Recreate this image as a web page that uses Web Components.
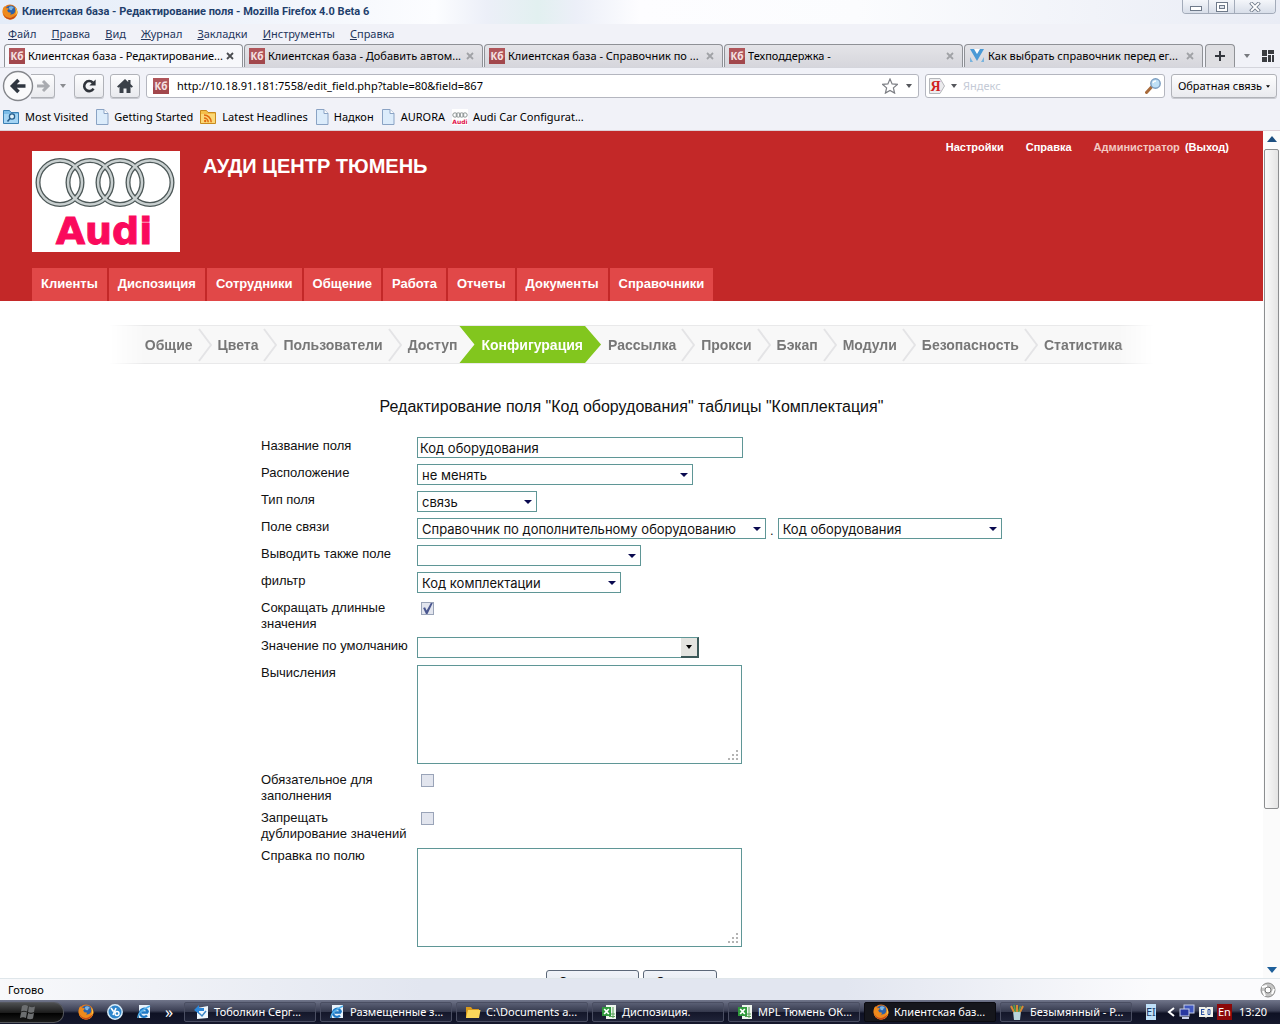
<!DOCTYPE html>
<html lang="ru">
<head>
<meta charset="utf-8">
<title>Клиентская база - Редактирование поля</title>
<style>
html, body { margin: 0; height: 100%; }
body { overflow: hidden; }
</style>
</head>
<body>
<browser-window></browser-window>
<script>
const ICONS = {
  fox: ['0 0 16 16', '<circle cx="8" cy="8" r="7.5" fill="#e8791a"/><circle cx="8.6" cy="6.4" r="5" fill="#2d62a8"/><path d="M7 3q3-2 5 1-2 0-2 2-3 1-3-3z" fill="#7db6e4"/><path d="M.6 6Q1 3 2.8 2.200q.2 1.600 1.400 2 1.800-.6 2.800.6-1 .8-1.800 1.600 1 2.400 3.200 2.200 1.200.8-.4 1.800 3.800.6 5.400-3.200.6-2.600-.8-4.600 3.600 3 2.600 7.400Q13.500 15.500 8 15.500.5 15 .6 6z" fill="#ee8a1c"/><path d="M1.200 9q2 5.500 8 4.800 4-.8 5.500-4Q13 15.400 8 15.400 2.500 15 1.200 9z" fill="#c4481a"/><path d="M12.800 3.400q2.400 3.600.4 7.600l1.400-1.200q1.400-3.600-1.800-6.400z" fill="#fbd04a"/>'],
  kb: ['0 0 16 16', '<rect width="16" height="16" fill="#b0555a"/><path d="M0 16h16V9Q8 13 0 9z" fill="#a2474c"/><text x="8" y="12" text-anchor="middle" font-family="Open Sans" font-weight="700" font-size="10" fill="#f6e4e4">Кб</text>'],
  vee: ['0 0 16 16', '<path d="M1 1h14L8 13z" fill="#4a9ad6"/><path d="M1 9l3 5H1zM15 9l-3 5h3z" fill="#7ab4de"/><path d="M5 1h6L8 6z" fill="#fff"/>'],
  back: ['0 0 32 32', '<circle cx="16" cy="16" r="14.500" fill="#fafafb" stroke="#85878c" stroke-width="1.400"/><path d="M16.500 10l-6 6 6 6M11 16h12.500" fill="none" stroke="#2f3640" stroke-width="3.600"/>'],
  fwd: ['0 0 16 16', '<path d="M8 3l5 5-5 5M13 8H2" fill="none" stroke="#a9abb0" stroke-width="3"/>'],
  reload: ['0 0 16 16', '<path d="M12.500 10.600A5 5 0 1 1 11.800 4.600" fill="none" stroke="#2f333a" stroke-width="2.600"/><path d="M14.600 1.400v6.200H8.400z" fill="#2f333a"/>'],
  home: ['0 0 16 16', '<path d="M8 1L0 8.400l1.400 1.400 1.100-1V15h4v-4.500h3V15h4V8.800l1.100 1L16 8.400l-2.500-2.300V2h-2.300v2z" fill="#3a4048"/>'],
  star: ['0 0 16 16', '<path d="M8 1l2.100 4.900 5.300.5-4 3.500 1.200 5.200L8 12.400l-4.600 2.700 1.200-5.200-4-3.500 5.300-.5z" fill="#fff" stroke="#7c7e84" stroke-width="1.200"/>'],
  down: ['0 0 6 4', '<path d="M0 0h6L3 4z" fill="currentColor"/>'],
  up: ['0 0 10 6', '<path d="M0 6h10L5 0z" fill="#1d4f80"/>'],
  dn: ['0 0 10 6', '<path d="M0 0h10L5 6z" fill="#1d5f9a"/>'],
  ya: ['0 0 16 16', '<path d="M.5.500h10.500l4.500 7.500-4.500 7.500H.5z" fill="#ececee" stroke="#b4b6ba"/><text x="6.500" y="12.500" text-anchor="middle" font-family="Liberation Serif" font-weight="700" font-size="14" fill="#d02020">Я</text>'],
  mag: ['0 0 16 16', '<path d="M1.500 14.500l5-5.500" stroke="#a86a3a" stroke-width="3" stroke-linecap="round"/><circle cx="10.500" cy="5.500" r="4.700" fill="#bfe0f6" stroke="#7a9cc0" stroke-width="1.400"/><path d="M8 5q.5-2 3-2" stroke="#fff" fill="none" stroke-width="1.400"/>'],
  folderq: ['0 0 16 16', '<path d="M.5 1.500h6l1.500 2h7.500v11H.5z" fill="#7cbce8" stroke="#3b80b4"/><path d="M1 5h14v9H1z" fill="#a4d4f4"/><circle cx="9" cy="7.500" r="2.600" fill="#dff1fc" stroke="#285e8c" stroke-width="1.300"/><path d="M7 9.500L4.500 12.500" stroke="#285e8c" stroke-width="1.600"/>'],
  page: ['0 0 14 16', '<path d="M1.500.500h7.500l4 4v11H1.500z" fill="#dcecfb" stroke="#8aa3c4"/><path d="M9 .5v4h4" fill="#fff" stroke="#8aa3c4"/>'],
  feed: ['0 0 16 16', '<path d="M.5 1.500h6l1.500 2h7.500v11H.5z" fill="#f4c04a" stroke="#c98a1e"/><path d="M1 5h14v9H1z" fill="#fbd877"/><circle cx="5.200" cy="12" r="1.200" fill="#e06a10"/><path d="M4 9a4.200 4.200 0 0 1 4.200 4.200M4 6a7.200 7.200 0 0 1 7.200 7.200" fill="none" stroke="#e06a10" stroke-width="1.500"/>'],
  audis: ['0 0 16 16', '<rect width="16" height="16" fill="#fff"/><g fill="none" stroke="#8c9494"><circle cx="3" cy="6" r="2.200"/><circle cx="6.300" cy="6" r="2.200"/><circle cx="9.700" cy="6" r="2.200"/><circle cx="13" cy="6" r="2.200"/></g><text x="8" y="14.500" text-anchor="middle" font-family="DejaVu Sans" font-weight="700" font-size="6" fill="#e0144c">Audi</text>'],
  groups: ['0 0 12 12', '<path d="M0 0h5v6H0zM6 0h6v4H6zM0 7h5v5H0zM6 5h3v7H6zM10 5h2v7h-2z" fill="#3a3c40"/>'],
  plus: ['0 0 10 10', '<path d="M5 0v10M0 5h10" stroke="#33363c" stroke-width="2"/>'],
  x: ['0 0 8 8', '<path d="M1 1l6 6M7 1L1 7" stroke="currentColor" stroke-width="1.800"/>'],
  min: ['0 0 12 10', '<rect x=".5" y="4.500" width="11" height="4" fill="#fff" stroke="#6f7a8a"/>'],
  max: ['0 0 12 10', '<rect x=".5" y=".5" width="11" height="9" fill="#fff" stroke="#6f7a8a"/><rect x="3.500" y="3.500" width="5" height="3" fill="#dfe4ec" stroke="#6f7a8a"/>'],
  close: ['0 0 12 10', '<path d="M1.500.500l9 9M10.500.500l-9 9" stroke="#6f7a8a" stroke-width="3.600"/><path d="M2 1l8 8M10 1l-8 8" stroke="#fff" stroke-width="1.800"/>'],
  rings: ['0 0 148 101', '<rect width="148" height="101" fill="#fff"/><g fill="none"><g stroke="#4d5858" stroke-width="5"><circle cx="28" cy="31.500" r="22"/><circle cx="58" cy="31.500" r="22"/><circle cx="88" cy="31.500" r="22"/><circle cx="118" cy="31.500" r="22"/></g><g stroke="#c9d0d0" stroke-width="2.400"><circle cx="28" cy="31.500" r="22"/><circle cx="58" cy="31.500" r="22"/><circle cx="88" cy="31.500" r="22"/><circle cx="118" cy="31.500" r="22"/></g></g><text x="72" y="93" text-anchor="middle" font-family="DejaVu Sans" font-weight="700" font-size="38" fill="#fa0a5c" stroke="#fa0a5c">Audi</text>'],
  chev: ['0 0 14 34', '<path d="M1 1l12 16L1 33" fill="none" stroke="#e4e4e6" stroke-width="2"/>'],
  grip: ['0 0 10 10', '<path d="M8 0h2v2H8zM4 4h2v2H4zM8 4h2v2H8zM0 8h2v2H0zM4 8h2v2H4zM8 8h2v2H8z" fill="#b4b4b4"/>'],
  recycle: ['0 0 16 16', '<circle cx="8" cy="8" r="7" fill="#c4c4c4" stroke="#8a8a8a"/><circle cx="8" cy="8" r="3" fill="#fff" stroke="#777"/><path d="M2 5l5-1M14 7l-2 5M5 14l-2-5" stroke="#fff" stroke-width="2"/>'],
  win: ['0 0 16 16', '<path d="M2 2q3-2 6 0L7 7.500Q4 6 1 7.500zM9 2.500q3 1.500 6 0l-1 5.500q-3 1.500-6 0zM1 8.500q3-1.500 6 0L6 14q-3-1.500-6 0zM8 9q3 1.500 6 0l-1 5.500q-3 1.500-6 0z" fill="#6c6e70"/>'],
  yo: ['0 0 16 16', '<circle cx="8" cy="8" r="7.200" fill="#2f86cc" stroke="#d8ecfa" stroke-width="1.500"/><path d="M4 4l2.500 3.500M9 4L6 11" stroke="#fff" stroke-width="1.600"/><circle cx="10" cy="9.500" r="2" fill="none" stroke="#fff" stroke-width="1.400"/>'],
  ie: ['0 0 16 16', '<path d="M3 1h11v13H3z" fill="#e8f2fa"/><path d="M12 8.500H5.500M12 8.500A4 4 0 1 0 11 11.500" fill="none" stroke="#1f78c4" stroke-width="2.400"/><path d="M2 14Q1 8 14 2" stroke="#54b0ea" stroke-width="1.400" fill="none"/>'],
  outl: ['0 0 16 16', '<path d="M4 4l11-2v12l-11 1z" fill="#eef6fc"/><path d="M6 9l3 3 4-5" stroke="#3d86c6" fill="none" stroke-width="1.500"/><path d="M1 6l5-5v3h5v3H6v3z" fill="#2c86d8"/>'],
  folder: ['0 0 16 16', '<path d="M1 3h5l1.500 2H14v9H1z" fill="#d99a1c"/><path d="M3 6h12.500L14 14H1z" fill="#fbd75a"/>'],
  xl: ['0 0 16 16', '<path d="M5 1h10v14H5z" fill="#eef6ee"/><path d="M8 10h6M8 12.500h6M12 3v11" stroke="#58a058"/><rect x="1" y="3" width="9" height="9" fill="#2f9a3c"/><path d="M3.200 5l4.600 5M7.800 5l-4.600 5" stroke="#fff" stroke-width="1.700"/>'],
  paint: ['0 0 16 16', '<path d="M4 7h8l-1 9H5z" fill="#b8d4dc"/><path d="M5 8L2 2M8 8V1M11 8l3-6" stroke="#d88a34" stroke-width="2"/><path d="M6.500 8L5 1M9.500 8l2-6" stroke="#54a04a" stroke-width="1.600"/>'],
  net: ['0 0 16 16', '<rect x="5" y="1" width="10" height="8" fill="#4058c0" stroke="#c8d0e8"/><rect x="1" y="5" width="9" height="7" fill="#2838a0" stroke="#c8d0e8"/><path d="M3 14h7" stroke="#c8d0e8" stroke-width="2"/>'],
  dict: ['0 0 14 12', '<path d="M0 1h6l1 1 1-1h6v10H8l-1 1-1-1H0z" fill="#f2f2ea"/><path d="M2.500 3v6M2.500 3.500h3M2.500 6h2.500M2.500 8.500h3M9 3.500h2v5H9z" fill="none" stroke="#2a50a0"/>'],
  lt: ['0 0 8 10', '<path d="M7 1L2 5l5 4" fill="none" stroke="#fff" stroke-width="2"/>']
};

class Shadowed extends HTMLElement {
  connectedCallback() {
    if (this.shadowRoot) return;
    this.attachShadow({ mode: 'open' }).innerHTML =
      '<style>*{box-sizing:border-box}' + this.css() + '</style>' + this.html();
  }
  css() { return ''; }
  html() { return '<slot></slot>'; }
}
const define = (name, css, html) => customElements.define(name, class extends Shadowed {
  css() { return typeof css === 'function' ? css(this) : css; }
  html() { return typeof html === 'function' ? html(this) : html; }
});
const icon = (n, w = 16, h = w) => `<ui-icon name="${n}" w="${w}" h="${h}"></ui-icon>`;

define('ui-icon',
  el => `:host{display:inline-block;flex:none;width:${el.getAttribute('w')}px;height:${el.getAttribute('h')}px}svg{display:block;width:100%;height:100%}`,
  el => { const [box, body] = ICONS[el.getAttribute('name')]; return `<svg viewBox="${box}" aria-hidden="true">${body}</svg>`; });

define('title-bar', `
  :host{display:flex;align-items:center;height:24px;padding-left:2px;gap:4px;font:700 11px/16px Roboto,sans-serif;color:#1f3f6c;
    background:linear-gradient(90deg,#e4ecf8,#f0f4fb 20%,#fcfdff 34%,#eceff8 38%,#e2f0f0 42%,#eceff8 45%,#fdfdff 50%,#fbfcfe 67%,#e9ecf5)}
  .t{flex:1}
  .w{display:flex;align-self:flex-start;margin-right:4px;border:1px solid #a3abb9;border-top:0;border-radius:0 0 4px 4px;overflow:hidden}
  button{width:26px;height:13px;padding:0;border:0;border-right:1px solid #a3abb9;background:linear-gradient(#f4f6fa,#d8dee9);display:grid;place-items:center}
  button:last-child{width:40px;border:0}`,
  `${icon('fox')}<span class="t">Клиентская база - Редактирование поля - Mozilla Firefox 4.0 Beta 6</span>
  <div class="w"><button aria-label="Свернуть">${icon('min', 12, 10)}</button><button aria-label="Развернуть">${icon('max', 12, 10)}</button><button aria-label="Закрыть">${icon('close', 12, 10)}</button></div>`);

define('menu-bar', `
  :host{display:flex;align-items:center;height:20px;padding-left:8px;gap:15px;font:11px/16px "Noto Sans",sans-serif;color:#24365c}
  button{font:inherit;color:inherit;border:0;background:none;padding:0}`,
  ['Файл', 'Правка', 'Вид', 'Журнал', 'Закладки', 'Инструменты', 'Справка'].map(m => `<button><u>${m[0]}</u>${m.slice(1)}</button>`).join(''));

define('browser-tab', `
  :host{display:flex;align-items:center;flex:0 1 239px;min-width:0;height:23px;padding:0 8px 0 4px;gap:3px;border:1px solid #8f9196;border-bottom:0;
    border-radius:4px 4px 0 0;background:linear-gradient(#e4e4e8,#d6d6dc);color:#a0a2a6;white-space:nowrap}
  :host([active]){background:#f7f8fb}
  span{flex:1;color:#000;overflow:hidden}
  button{border:0;padding:0;background:none;color:inherit;line-height:0}
  :host([active]) button{color:#4a4c50}`,
  el => `${icon(el.getAttribute('icon'))}<span><slot></slot></span><button aria-label="Закрыть вкладку">${icon('x', 8)}</button>`);

define('tab-strip', `
  :host{display:flex;align-items:flex-end;height:24px;padding:0 6px 0 4px;gap:1px;border-bottom:1px solid #d4d5dc;font:11px/16px "Noto Sans",sans-serif}
  .n{width:30px;height:23px;margin-left:1px;padding:0;border:1px solid #8f9196;border-bottom:0;border-radius:4px 4px 0 0;background:#dedee2}
  .r{display:flex;flex:1;align-items:center;justify-content:flex-end;gap:12px;height:23px;color:#77797e}`,
  `<browser-tab icon="kb" active>Клиентская база - Редактирование...</browser-tab>
  <browser-tab icon="kb">Клиентская база - Добавить автом...</browser-tab>
  <browser-tab icon="kb">Клиентская база - Справочник по ...</browser-tab>
  <browser-tab icon="kb">Техподдержка -</browser-tab>
  <browser-tab icon="vee">Как выбрать справочник перед ег...</browser-tab>
  <button class="n" aria-label="Новая вкладка">${icon('plus', 10)}</button>
  <div class="r">${icon('down', 6, 4)}${icon('groups', 12)}</div>`);

define('nav-bar', `
  :host{display:flex;align-items:center;height:36px;padding:0 3px 0 2px;font:11px/16px "Noto Sans",sans-serif;color:#55575c}
  button{font:inherit;height:24px;border:1px solid #b0b2b8;border-radius:3px;background:linear-gradient(#fdfdfe,#e9eaee);padding:0;display:flex;align-items:center;justify-content:center;box-shadow:0 1px 0 #c8cad0}
  .b{height:32px;border:0;background:none;box-shadow:none;z-index:1}
  .f{width:24px;margin-left:-3px;border-left:0;border-radius:0 3px 3px 0}
  .d{display:flex;margin:0 8px 0 5px;color:#8a8c90}
  .s{width:30px;margin-right:6px}
  .box{display:flex;align-items:center;height:24px;border:1px solid #b4b6bf;border-radius:3px;background:#fff;padding:0 6px}
  .url{flex:1;gap:8px}.q{width:240px;margin:0 6px;gap:6px;padding:0 3px}
  input{font:inherit;flex:1;min-width:0;border:0;padding:0;outline:0;background:none;color:#000}
  input::placeholder{color:#c4cad6;opacity:1}
  .o{color:#000;width:106px;gap:4px}`,
  `<button class="b" aria-label="Назад">${icon('back', 32)}</button><button class="f" aria-label="Вперёд">${icon('fwd')}</button><span class="d">${icon('down', 6, 4)}</span>
  <button class="s" aria-label="Обновить">${icon('reload')}</button><button class="s" aria-label="Домой">${icon('home')}</button>
  <div class="box url">${icon('kb')}<input aria-label="Адрес" value="http://10.18.91.181:7558/edit_field.php?table=80&amp;field=867">${icon('star')}${icon('down', 6, 4)}</div>
  <div class="box q">${icon('ya')}${icon('down', 6, 4)}<input aria-label="Поиск" placeholder="Яндекс">${icon('mag')}</div>
  <button class="o">Обратная связь ${icon('down', 4, 3)}</button>`);

define('bookmarks-bar', `
  :host{display:flex;align-items:center;height:27px;padding-left:3px;gap:7px;font:11px/16px "Noto Sans",sans-serif;border-bottom:1px solid #dccfd6}
  a{display:flex;align-items:center;gap:5px;color:#000;text-decoration:none}
  a:nth-child(even){gap:6px}`,
  [['folderq', 'Most Visited'], ['page', 'Getting Started'], ['feed', 'Latest Headlines'], ['page', 'Надкон'], ['page', 'AURORA'], ['audis', 'Audi Car Configurat...']]
    .map(([i, t]) => `<a href="#">${icon(i, i === 'page' ? 14 : 16, 16)}${t}</a>`).join(''));

define('site-header', `
  :host{display:flex;flex-direction:column;height:170px;padding:0 32px;background:#c32828;font:700 13px/16px "Liberation Sans",sans-serif;color:#fff}
  .top{flex:1;display:flex;align-items:flex-start;padding-top:20px}
  h1{flex:1;margin:3px 0 0 23px;font-size:20px;line-height:24px}
  .u{display:flex;gap:22px;margin:-12px 2px 0 0;font-size:11px}
  a{color:inherit;text-decoration:none}.p{color:#f3c9c2;margin-right:2px}
  nav{display:flex;gap:2px}
  nav a{padding:8px 9px 9px;background:#e14848}`,
  `<div class="top">${icon('rings', 148, 101)}<h1>АУДИ ЦЕНТР ТЮМЕНЬ</h1><div class="u"><a href="#">Настройки</a><a href="#">Справка</a><span><span class="p">Администратор</span> (<a href="#">Выход</a>)</span></div></div>
  <nav>${['Клиенты', 'Диспозиция', 'Сотрудники', 'Общение', 'Работа', 'Отчеты', 'Документы', 'Справочники'].map(t => `<a href="#">${t}</a>`).join('')}</nav>`);

define('settings-steps', `
  :host{display:flex;width:max-content;height:39px;margin:24px auto 0;padding:0 32px 0 36px;font:700 14px/38px "Liberation Sans",sans-serif;
    border:solid #e9e9ea;border-width:1px 0;background:#f8f8f8;
    -webkit-mask:linear-gradient(90deg,transparent,#000 36px,#000 calc(100% - 36px),transparent);mask:linear-gradient(90deg,transparent,#000 36px,#000 calc(100% - 36px),transparent)}
  a{display:flex;align-items:center;color:#777;text-decoration:none}
  ui-icon{margin:0 6px 0 5px}
  .on{color:#fff;background:#82c61e;padding:0 18px 0 22px;clip-path:polygon(0 0,calc(100% - 16px) 0,100% 50%,calc(100% - 16px) 100%,0 100%,15px 50%);margin:0 7px 0 2px}`,
  () => { const s = ['Общие', 'Цвета', 'Пользователи', 'Доступ', 'Конфигурация', 'Рассылка', 'Прокси', 'Бэкап', 'Модули', 'Безопасность', 'Статистика'];
    return s.map((t, i) => i === 4 ? `<a class="on" href="#">${t}</a>` : `<a href="#">${t}${i === 3 || i === 10 ? '' : icon('chev', 14, 34)}</a>`).join(''); });

const select = (id, text, w, label = '') => `<span class="sel" style="width:${w}px"><select id="${id}"${label && ` aria-label="${label}"`}><option>${text}</option></select></span>`;
const row = (id, label, control) => `<div class="row"><label for="${id}">${label}</label><div class="c">${control}</div></div>`;
define('field-editor', `
  :host{display:block;padding-bottom:16px;font:13px/16px "Liberation Sans",sans-serif;color:#111}
  h2{margin:33px 0 20px;font-weight:400;font-size:16px;line-height:20px;text-align:center}
  form{width:741px;max-width:100%;margin:0 auto;display:flex;flex-direction:column;gap:6px}
  .row{display:flex;gap:6px}
  label{flex:0 0 150px;margin:1px 0 -1px}
  .c{flex:1;display:flex;align-items:flex-start;gap:4px}
  input,select,textarea,button{font:13px/16px Inter,sans-serif;color:#111;margin:0}
  .t,select,textarea{border:1px solid #5f9696;border-radius:0;background:#fff;outline:0;height:21px}
  .t{width:326px;padding:1px 2px}
  .sel{position:relative;display:flex}
  select{appearance:none;width:100%;padding:0 4px}
  .sel::after{content:"";position:absolute;right:5px;top:9px;border:4px solid transparent;border-top-color:#0a0a50;border-bottom:0;pointer-events:none}
  .dot{align-self:flex-end}
  .ch{appearance:none;width:13px;height:13px;margin:3px 4px;border:1px solid #9aa4b8;background:#e2e5ee}
  .ch:checked::before{content:"";display:block;width:11px;height:11px;background:#4c5890;clip-path:polygon(10% 45%,28% 38%,42% 68%,80% 0,98% 0,50% 100%,36% 100%)}
  .combo{display:flex;width:282px}.combo .t{flex:1;width:auto;min-width:0;border-right:0}
  .combo button{width:18px;padding:0;border:1px solid #5f9696;border-width:1px 2px 2px 0;border-right-color:#3c5858;border-bottom-color:#3c5858;background:#e4e4e0;display:grid;place-items:center;color:#000}
  .area{position:relative;margin:1px 0;width:325px;height:99px}
  textarea{display:block;width:100%;height:100%;resize:none}
  .area ui-icon{position:absolute;right:4px;bottom:4px}
  .acts{display:flex;justify-content:center;gap:4px;margin-top:16px}
  .acts button{height:24px;padding:0;border:1px solid #5c6878;border-radius:3px;background:linear-gradient(#f0f3f8,#dfe4ec)}`,
  `<h2>Редактирование поля "Код оборудования" таблицы "Комплектация"</h2><form>
  ${row('name', 'Название поля', '<input class="t" id="name" value="Код оборудования">')}
  ${row('place', 'Расположение', select('place', 'не менять', 276))}
  ${row('type', 'Тип поля', select('type', 'связь', 120))}
  ${row('link', 'Поле связи', select('link', 'Справочник по дополнительному оборудованию', 349) + '<span class="dot">.</span>' + select('link2', 'Код оборудования', 224, 'Поле таблицы'))}
  ${row('also', 'Выводить также поле', select('also', '', 224))}
  ${row('filter', 'фильтр', select('filter', 'Код комплектации', 204))}
  ${row('short', 'Сокращать длинные значения', '<input class="ch" id="short" type="checkbox" checked>')}
  ${row('def', 'Значение по умолчанию', `<div class="combo"><input class="t" id="def"><button type="button" aria-label="Открыть список">${icon('down', 8, 4)}</button></div>`)}
  ${row('calc', 'Вычисления', `<div class="area"><textarea id="calc"></textarea>${icon('grip', 10)}</div>`)}
  ${row('req', 'Обязательное для заполнения', '<input class="ch" id="req" type="checkbox">')}
  ${row('uniq', 'Запрещать дублирование значений', '<input class="ch" id="uniq" type="checkbox">')}
  ${row('help', 'Справка по полю', `<div class="area"><textarea id="help"></textarea>${icon('grip', 10)}</div>`)}
  <div class="acts"><button type="button" style="width:93px">Сохранить</button><button type="button" style="width:74px">Отмена</button></div></form>`);

define('scroll-bar', `
  :host{display:flex;flex-direction:column;align-items:center;width:17px;padding:5px 0;background:#fbfbfb;gap:7px}
  .tr{flex:1;width:15px}.th{height:81.4%;border:1px solid #8c8e90;border-radius:2px;background:linear-gradient(90deg,#fafafa,#e4e4e4)}`,
  `${icon('up', 10, 6)}<div class="tr"><div class="th"></div></div>${icon('dn', 10, 6)}`);

define('status-bar', `
  :host{display:flex;align-items:center;justify-content:space-between;height:22px;padding:0 4px 0 8px;font:11px/16px "Noto Sans",sans-serif;border-top:1px solid #dfe6ea;
    background:linear-gradient(90deg,#f8f9fb,#e2e6f0 33%,#e2e6f0 66%,#fbfbfd 90%)}`,
  `<span>Готово</span>${icon('recycle', 16)}`);

define('task-button', `
  :host{display:block;flex:0 1 132px;min-width:0}
  button{display:flex;align-items:center;gap:5px;width:100%;height:20px;padding:0 8px;border:1px solid #4a4e62;border-radius:2px;background:linear-gradient(#5a5f74,#34384c 50%,#14172a 52%,#1f2338);font:inherit;color:#fff;white-space:nowrap;overflow:hidden}
  :host([active]) button{background:#15161c;border-color:#0a0a10}`,
  el => `<button>${icon(el.getAttribute('icon'))}<span><slot></slot></span></button>`);

define('task-bar', `
  :host{display:flex;align-items:center;height:24px;gap:4px;color:#fff;font:11px/16px "Noto Sans",sans-serif;background:linear-gradient(#70758a,#3b3f54 45%,#0e1124 55%,#15182c)}
  .st{width:64px;height:21px;padding:0 0 0 20px;border:1px solid #55575c;border-left:0;border-radius:0 10px 10px 0;background:linear-gradient(#4c4e50,#1c1c1c 50%,#000 52%,#1a1a1a);text-align:left;line-height:0}
  .ql{display:flex;gap:13px;padding-left:10px;width:112px;align-items:center}
  .ql span{font-size:16px}
  .tray{margin-left:auto;display:flex;align-items:center;gap:4px;padding-right:13px}
  .ei{background:#bfe0f8;color:#1c3c6c;width:10px;overflow:hidden}.en{background:#8c0808;width:15px;text-align:center}.k{margin-left:3px}
  .s{display:flex;gap:4px;flex:1;min-width:0}`,
  `<button class="st" aria-label="Пуск">${icon('win')}</button>
  <div class="ql">${icon('fox')}${icon('yo')}${icon('ie')}<span>»</span></div>
  <div class="s">${[['outl', 'Тоболкин Серг...'], ['ie', 'Размещенные з...'], ['folder', 'C:\\Documents a...'], ['xl', 'Диспозиция.'], ['xl', 'MPL Тюмень ОК...'], ['fox', 'Клиентская баз...', 'active'], ['paint', 'Безымянный - P...']]
    .map(([i, t, a = '']) => `<task-button icon="${i}" ${a}>${t}</task-button>`).join('')}</div>
  <div class="tray"><span class="ei">EI</span><span class="k"></span>${icon('lt', 8, 10)}${icon('net', 16)}${icon('dict', 14, 12)}<span class="en">En</span><span class="k">13:20</span></div>`);

define('browser-window', `
  :host{display:flex;flex-direction:column;height:100vh;background:#f1f2f8;color:#000}
  .view{flex:1;min-height:0;display:flex;background:#fff}
  main{flex:1;min-width:0;overflow-y:auto;scrollbar-width:none}`,
  `<title-bar></title-bar><menu-bar></menu-bar><tab-strip></tab-strip><nav-bar></nav-bar><bookmarks-bar></bookmarks-bar>
  <div class="view"><main><site-header></site-header><settings-steps></settings-steps><field-editor></field-editor></main><scroll-bar></scroll-bar></div>
  <status-bar></status-bar><task-bar></task-bar>`);
</script>
</body>
</html>
